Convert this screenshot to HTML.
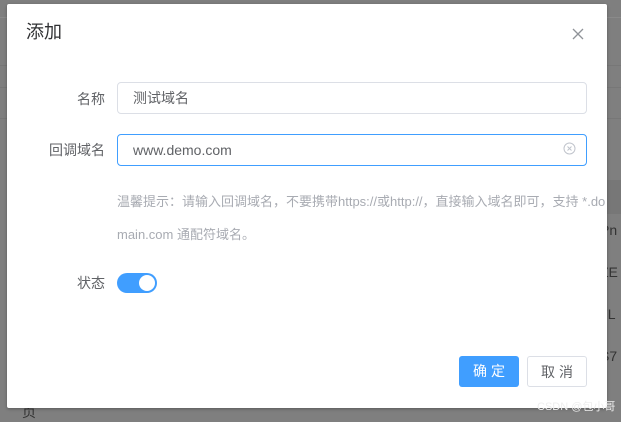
<!DOCTYPE html>
<html><head><meta charset="utf-8"><style>
body{margin:0;width:621px;height:418px;overflow:hidden;background:#7f7f7f;font-family:"Liberation Sans","Noto Sans CJK SC",sans-serif;position:relative}
.ln{position:absolute;left:0;width:621px;height:1px;background:#777}
.dlg{position:absolute;left:7px;top:4px;width:600px;height:404px;background:#fff;border-radius:2px;box-shadow:0 1px 3px rgba(0,0,0,.3)}
.t{position:absolute;left:19px;top:14px;font-size:18px;color:#303133}
.x{position:absolute;left:565px;top:24px}
.lab{position:absolute;width:98px;text-align:right;font-size:14px;color:#606266;left:0}
.inp{position:absolute;left:110px;height:30px;border:1px solid #dcdfe6;border-radius:4px;font-size:14px;color:#606266;line-height:30px;padding-left:15px;box-sizing:content-box;width:453px}
.hint{position:absolute;left:110px;font-size:13px;color:#a8abb2}
.sw{position:absolute;left:110px;top:269px;width:40px;height:20px;border-radius:10px;background:#409eff}
.sw i{position:absolute;right:2px;top:2px;width:16px;height:16px;border-radius:50%;background:#fff}
.btn{position:absolute;top:352px;width:60px;height:31px;border-radius:3px;font-size:14px;text-align:center;line-height:31px;letter-spacing:4px;text-indent:4px;box-sizing:border-box}
</style></head><body>
<div class="ln" style="top:17px;background:#8a8a8a"></div>
<div class="ln" style="top:65px"></div>
<div class="ln" style="top:87px"></div>
<div class="ln" style="top:118px"></div>
<div style="position:absolute;left:607px;top:180px;width:14px;height:34px;background:#777"></div>
<div style="position:absolute;left:600px;top:222px;color:#333;font-size:14px">Pn</div>
<div style="position:absolute;left:600px;top:264px;color:#333;font-size:14px">ZE</div>
<div style="position:absolute;left:600px;top:306px;color:#333;font-size:14px">7L</div>
<div style="position:absolute;left:600px;top:348px;color:#333;font-size:14px">S7</div>
<div style="position:absolute;left:22px;top:402px;color:#333;font-size:14px">页</div>
<div class="dlg">
<div class="t">添加</div>
<svg class="x" width="12" height="12" viewBox="0 0 12 12"><path d="M1 1L11 11M11 1L1 11" stroke="#909399" stroke-width="1.3"/></svg>
<div class="lab" style="top:85px">名称</div>
<div class="inp" style="top:78px">测试域名</div>
<div class="lab" style="top:136px">回调域名</div>
<div class="inp" style="top:130px;border-color:#409eff">www.demo.com</div>
<svg style="position:absolute;left:556px;top:138px" width="13" height="13" viewBox="0 0 13 13"><circle cx="6.5" cy="6.5" r="5.5" fill="none" stroke="#c0c4cc"/><path d="M4.5 4.5L8.5 8.5M8.5 4.5L4.5 8.5" stroke="#c0c4cc"/></svg>
<div class="hint" style="top:187px">温馨提示：请输入回调域名，不要携带https://或http://，直接输入域名即可，支持 *.do</div>
<div class="hint" style="top:220px">main.com 通配符域名。</div>
<div class="lab" style="top:269px">状态</div>
<div class="sw"><i></i></div>
<div class="btn" style="left:452px;background:#409eff;color:#fff">确定</div>
<div class="btn" style="left:520px;border:1px solid #dcdfe6;color:#606266">取消</div>
</div>
<div style="position:absolute;left:537px;top:398px;font-size:11px;color:#eee">CSDN @包小哥</div>
</body></html>
